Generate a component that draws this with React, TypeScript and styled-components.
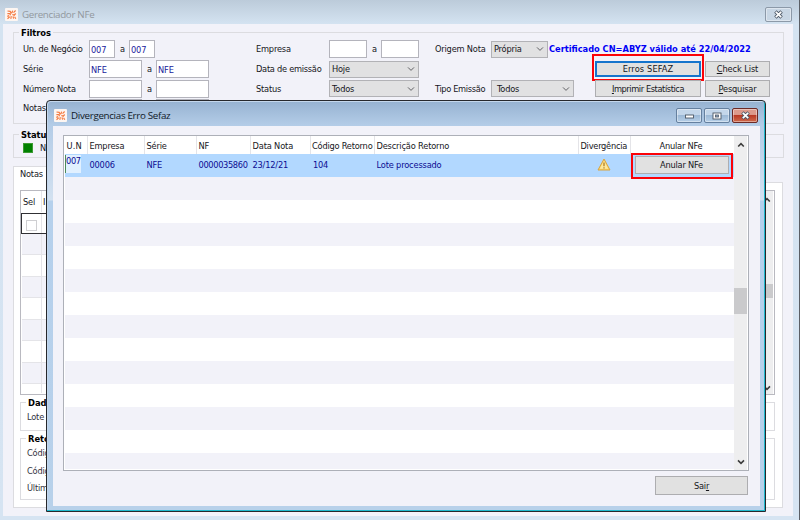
import React from 'react';
import styled, { createGlobalStyle, css } from 'styled-components';

const UI = "'DejaVu Sans Condensed', 'DejaVu Sans', sans-serif";
const TITLE = "'Open Sans', 'Noto Sans', sans-serif";

const Global = createGlobalStyle`
  *, *::before, *::after { box-sizing: border-box; }
  body { margin: 0; overflow: hidden; }
  button { appearance: none; padding: 0; margin: 0; border-radius: 0; }
`;

const Desktop = styled.div`
  position: relative;
  width: 800px;
  height: 520px;
  overflow: hidden;
  font: 9.2px/12px ${UI};
  letter-spacing: -0.2px;
  color: #16161c;
  white-space: nowrap;
`;

const MainWindow = styled.div`
  display: flex;
  flex-direction: column;
  height: 520px;
  padding: 0 6px 4px 3px;
  border-right: 1px solid #5b5f66;
  background: linear-gradient(#bccbda 0, #d4e3f1 24px, #d6e4f2 100%);
`;

const TitleBar = styled.div<{ $h: number; $dim?: boolean }>`
  display: flex;
  align-items: center;
  flex: none;
  height: ${(p) => p.$h}px;
  padding-left: 2px;
  font: 9.8px/14px ${TITLE};
  letter-spacing: -0.32px;
  color: ${(p) => (p.$dim ? '#92989e' : '#101828')};
`;

const TitleText = styled.span`
  margin: 5px auto 0 4px;
`;

const AppIconSvg = styled.svg`
  margin-top: 4px;
  flex: none;
`;

const AppIcon = () => (
  <AppIconSvg width="13" height="13" viewBox="0 0 13 13">
    <rect width="13" height="13" rx="1" fill="#fdf6f2" />
    <g stroke="#f47a40" strokeWidth="1.15" fill="none">
      <path d="M2.5 3 5.2 3.4 6.4 5.6M7.6 2.6 7 4.8M8.5 4.6 10.6 2.5M2.4 5.6 4.8 5.5 5.6 7.2M2.3 8.4 4.2 7.6M2.5 10.7 4.7 8.8M5.8 10.8 6.3 8.2M7.4 6.4 9.2 7.2 10.7 5.5M8 8.4 8.6 10.6M9.6 8.7 10.8 10.8" />
    </g>
  </AppIconSvg>
);

const WinButton = styled.button<{ $kind: 'plain' | 'pale' | 'close' }>`
  display: grid;
  place-items: center;
  width: 26px;
  height: 15px;
  border: 1px solid #65809f;
  border-radius: 2px;
  background: linear-gradient(#c3d6ea 0 45%, #9db9d6 50%, #b6cfe8);
  box-shadow: inset 0 0 0 1px #ffffff66;
  ${(p) =>
    p.$kind === 'pale' &&
    css`
      width: 27px;
      border-color: #8c99a8;
      background: #c8d6e4;
      margin: 4px 1px 0 0;
    `}
  ${(p) =>
    p.$kind === 'close' &&
    css`
      border-color: #6c2a26;
      background: linear-gradient(#dc9a8c 0 42%, #b93a25 50%, #cf6a4c);
    `}
`;

const CloseGlyph = () => (
  <svg width="11" height="9" viewBox="0 0 11 9">
    <path d="M2.4 1.5 8.6 7.5M8.6 1.5 2.4 7.5" stroke="#4c5765" strokeWidth="3.5" />
    <path d="M2.8 1.9 8.2 7.1M8.2 1.9 2.8 7.1" stroke="#fff" strokeWidth="1.8" />
  </svg>
);
const MinGlyph = () => (
  <svg width="11" height="7" viewBox="0 0 11 7">
    <rect x="1.5" y="3" width="8" height="3" fill="#fff" stroke="#4c5765" strokeWidth="0.9" />
  </svg>
);
const MaxGlyph = () => (
  <svg width="10" height="8" viewBox="0 0 10 8">
    <rect x="1" y="1" width="8" height="6" fill="#fff" stroke="#4c5765" strokeWidth="0.9" />
    <rect x="3.5" y="3" width="3" height="2" fill="#8fa6c0" stroke="#4c5765" strokeWidth="0.8" />
  </svg>
);

const Client = styled.div`
  flex: 1;
  min-height: 0;
  padding: 8px 9px 0 10px;
  background: #f2f2f9;
`;

const Group = styled.section<{ $h: number; $mb?: number }>`
  position: relative;
  height: ${(p) => p.$h}px;
  margin-bottom: ${(p) => p.$mb ?? 0}px;
  border: 1px solid #dcdce0;
`;

const Legend = styled.strong<{ $page?: boolean }>`
  position: absolute;
  top: -6px;
  left: 5px;
  padding: 0 2px;
  font-size: 9.3px;
  letter-spacing: -0.05px;
  color: #000;
  background: ${(p) => (p.$page ? '#fff' : '#f2f2f9')};
`;

const Filters = styled.div`
  display: flex;
  padding: 6px 0 0 9px;
`;

const FilterColumn = styled.div<{ $w?: number }>`
  display: grid;
  grid-template-rows: 20px 20px 19px 20px;
  width: ${(p) => (p.$w ? `${p.$w}px` : 'auto')};
`;

const FilterRow = styled.div`
  display: flex;
  align-items: center;
`;

const Label = styled.label<{ $w: number; $ls?: number }>`
  flex: none;
  width: ${(p) => p.$w}px;
  letter-spacing: ${(p) => p.$ls ?? -0.2}px;
`;

const To = styled.span`
  width: 14px;
  padding-left: 1px;
  text-align: center;
`;

const Field = styled.div<{ $w: number }>`
  width: ${(p) => p.$w}px;
  height: 18px;
  padding: 3px 0 0 1px;
  border: 1px solid #b4b4bc;
  background: #fff;
  color: #1a1a9c;
  letter-spacing: -0.15px;
`;

const SelectBox = styled.div<{ $w: number; $pad?: number }>`
  display: flex;
  align-items: center;
  justify-content: space-between;
  width: ${(p) => p.$w}px;
  height: 17px;
  padding: 0 3px 0 ${(p) => p.$pad ?? 2}px;
  border: 1px solid #b2b2b6;
  background: #e1e1e2;
`;

const Chevron = ({ up, bold }: { up?: boolean; bold?: boolean }) => (
  <svg width="8" height="6" viewBox="0 0 8 6">
    <path
      d={up ? 'M1.2 4.5 4 1.7 6.8 4.5' : 'M1 1.4 4 4.4 7 1.4'}
      fill="none"
      stroke={bold ? '#3c3c3c' : '#606064'}
      strokeWidth={bold ? 1.6 : 1}
    />
  </svg>
);

const Select = ({ w, pad, children }: { w: number; pad?: number; children: string }) => (
  <SelectBox $w={w} $pad={pad}>
    <span>{children}</span>
    <Chevron />
  </SelectBox>
);

const Certificate = styled.strong`
  margin-left: 1px;
  color: #0000f5;
  letter-spacing: 0;
`;

const PushButton = styled.button<{ $w: number; $h?: number; $ls?: number; $focus?: boolean; $ml?: number }>`
  position: relative;
  flex: none;
  width: ${(p) => p.$w}px;
  height: ${(p) => p.$h ?? 17}px;
  margin-left: ${(p) => p.$ml ?? 0}px;
  border: ${(p) => (p.$focus ? '2px solid #1574cc' : '1px solid #adadb0')};
  background: #e1e1e1;
  font: 9.2px/12px ${UI};
  letter-spacing: ${(p) => p.$ls ?? -0.2}px;
  color: #16161c;
`;

const Highlight = styled.span<{ $inset: string }>`
  position: absolute;
  inset: ${(p) => p.$inset};
  border: 2px solid #fb0308;
  pointer-events: none;
`;

const StatusBody = styled.div`
  display: flex;
  align-items: center;
  gap: 7px;
  padding: 7px 0 0 9px;
`;

const StatusSwatch = styled.i`
  width: 10px;
  height: 10px;
  background: #008000;
  border: 1px solid #3b9a32;
`;

const Tab = styled.div`
  position: relative;
  width: 90px;
  height: 17px;
  margin-bottom: -1px;
  padding: 1px 0 0 6px;
  border: 1px solid #dcdce0;
  border-bottom: 0;
  background: #fff;
  z-index: 1;
`;

const TabPage = styled.div`
  height: 326px;
  margin-right: 1px;
  padding: 7px 7px 0 6px;
  border: 1px solid #dcdce0;
  background: #fff;
`;

const NotesTable = styled.div`
  display: flex;
  height: 205px;
  margin-bottom: 7px;
  border: 1px solid #b9b9c0;
  background: #fff;
`;

const NotesGrid = styled.div`
  flex: 1;
  padding-left: 1px;
`;

const NotesRow = styled.div<{ $head?: boolean; $alt?: boolean; $current?: boolean }>`
  display: grid;
  grid-template-columns: 19px 1fr;
  align-items: center;
  height: ${(p) => (p.$head ? 22 : p.$current ? 21 : 21.45)}px;
  border-bottom: 1px solid ${(p) => (p.$head ? '#fff' : '#e4e4e8')};
  background: ${(p) => (p.$alt ? '#f2f2f9' : '#fff')};
  & > * {
    height: 100%;
    display: flex;
    align-items: center;
    padding-left: 1px;
  }
  & > * + * {
    border-left: 1px solid #e4e4e8;
  }
  &:last-child {
    height: 9px;
    border-bottom: 0;
  }
  ${(p) =>
    p.$current &&
    css`
      border: 1px solid #303034;
      margin-left: -1px;
    `}
`;

const CheckBox = styled.i`
  width: 11px;
  height: 11px;
  margin: 3px 0 0 3px;
  border: 1px solid #cfcfd2;
  background: #fff;
`;

const ScrollTrack = styled.div<{ $w: number; $pad: string }>`
  display: flex;
  flex-direction: column;
  align-items: center;
  flex: none;
  width: ${(p) => p.$w}px;
  padding: ${(p) => p.$pad};
  margin-right: 1px;
  background: #eeeeef;
`;

const ScrollThumb = styled.div<{ $before: number; $h: number }>`
  width: 100%;
  height: ${(p) => p.$h}px;
  margin-top: ${(p) => p.$before}px;
  margin-bottom: auto;
  background: #cacacc;
`;

const DetailLine = styled.div<{ $h: number }>`
  height: ${(p) => p.$h}px;
  padding-left: 6px;
  color: #33333d;
`;

const DetailBody = styled.div`
  padding-top: 8px;
`;

const Dialog = styled.div`
  position: absolute;
  left: 46px;
  top: 100px;
  z-index: 5;
  display: flex;
  flex-direction: column;
  width: 720px;
  height: 412px;
  padding: 0 5px 5px 5px;
  border: 1px solid #26282c;
  border-radius: 4px 4px 0 0;
  background: linear-gradient(#96b2d1 0, #b3cce7 24px, #d3e1f0 99px, #b5d0ec 100px, #b8d1ea 100%);
  box-shadow: inset -1px -1px 0 #1fb8cc, inset 1px 1px 0 #c4d7ec;
`;

const Controls = styled.div`
  display: flex;
  gap: 2px;
  margin: 4px 2px 0 0;
`;

const DialogBody = styled.div`
  flex: 1;
  display: flex;
  flex-direction: column;
  align-items: flex-start;
  margin-left: 1px;
  padding: 9px 0 0 10px;
  background: #f2f2f9;
`;

const ErrorTable = styled.div`
  display: flex;
  width: 686px;
  height: 336px;
  margin-bottom: 5px;
  border: 1px solid #adb0b8;
  padding-left: 1px;
  background: #fff;
`;

const ErrorGrid = styled.div`
  flex: 1;
  overflow: hidden;
`;

const ErrorRow = styled.div<{ $head?: boolean; $selected?: boolean; $alt?: boolean; $last?: boolean }>`
  display: grid;
  grid-template-columns: 23px 57px 52px 54px 60px 64px 204px 52px 1fr;
  height: ${(p) => (p.$head ? 18 : p.$last ? 16 : 23)}px;
  background: ${(p) => (p.$selected ? '#b2d8ff' : p.$alt ? '#f2f2f9' : '#fff')};
  color: ${(p) => (p.$selected ? '#0c0c92' : '#16161c')};
`;

const Cell = styled.div<{ $head?: boolean; $ls?: number; $center?: boolean; $pl?: number; $pr?: number }>`
  display: flex;
  align-items: center;
  justify-content: ${(p) => (p.$center ? 'center' : 'flex-start')};
  padding: ${(p) => (p.$head ? '1px 0 0' : '0 0 2px')};
  padding-left: ${(p) => (p.$center ? 0 : p.$pl ?? 1.5)}px;
  padding-right: ${(p) => p.$pr ?? 0}px;
  letter-spacing: ${(p) => p.$ls ?? -0.2}px;
  ${(p) =>
    p.$head &&
    css`
      border-right: 1px solid #e4e4e8;
      &:last-child { border-right: 0; }
    `}
`;

const EditCell = styled.div`
  align-self: start;
  width: 16px;
  height: 18px;
  margin-top: 1px;
  border-left: 1px solid #4c8a5b;
  background: #e1f0ff;
  letter-spacing: -0.35px;
`;

const Warning = () => (
  <svg width="14" height="13" viewBox="0 0 14 13">
    <path d="M7 1 13 12H1Z" fill="#fbd667" stroke="#d9a441" strokeWidth="1" strokeLinejoin="round" />
    <path d="M7 3 11.2 10.8H2.8Z" fill="#fde9a0" />
    <path d="M7 4.6V8.2M7 9.2V10.5" stroke="#a8741c" strokeWidth="1.2" />
  </svg>
);

const ExitRow = styled.div`
  display: flex;
  justify-content: flex-end;
  width: 685px;
`;

const HEADERS: { text: string; ls?: number; center?: boolean; pl?: number; pr?: number }[] = [
  { text: 'U.N', ls: 0.2 },
  { text: 'Empresa' },
  { text: 'Série' },
  { text: 'NF' },
  { text: 'Data Nota', ls: -0.15 },
  { text: 'Código Retorno', ls: -0.22, pl: 1 },
  { text: 'Descrição Retorno', ls: -0.17 },
  { text: 'Divergência', ls: -0.25 },
  { text: 'Anular NFe', center: true, pr: 3 },
];

const EMPTY_ROWS = Array.from({ length: 13 }, (_, i) => i);
const NOTE_ROWS = Array.from({ length: 8 }, (_, i) => i);

export default function App() {
  return (
    <Desktop>
      <Global />
      <MainWindow>
        <TitleBar $h={24} $dim>
          <AppIcon />
          <TitleText>Gerenciador NFe</TitleText>
          <WinButton $kind="pale"><CloseGlyph /></WinButton>
        </TitleBar>
        <Client>
          <Group $h={92} $mb={10}>
            <Legend>Filtros</Legend>
            <Filters>
              <FilterColumn $w={233}>
                <FilterRow>
                  <Label $w={66} $ls={-0.24}>Un. de Negócio</Label>
                  <Field $w={26}>007</Field><To>a</To><Field $w={26}>007</Field>
                </FilterRow>
                <FilterRow>
                  <Label $w={66}>Série</Label>
                  <Field $w={53}>NFE</Field><To>a</To><Field $w={53}>NFE</Field>
                </FilterRow>
                <FilterRow>
                  <Label $w={66}>Número Nota</Label>
                  <Field $w={53} /><To>a</To><Field $w={53} />
                </FilterRow>
                <FilterRow>
                  <Label $w={66}>Notas</Label>
                  <Field $w={53} /><To /><Field $w={53} />
                </FilterRow>
              </FilterColumn>
              <FilterColumn $w={179}>
                <FilterRow>
                  <Label $w={73}>Empresa</Label>
                  <Field $w={38} /><To>a</To><Field $w={38} />
                </FilterRow>
                <FilterRow>
                  <Label $w={73} $ls={-0.27}>Data de emissão</Label>
                  <Select w={90}>Hoje</Select>
                </FilterRow>
                <FilterRow>
                  <Label $w={73}>Status</Label>
                  <Select w={90}>Todos</Select>
                </FilterRow>
              </FilterColumn>
              <FilterColumn>
                <FilterRow>
                  <Label $w={56}>Origem Nota</Label>
                  <Select w={57}>Própria</Select>
                  <Certificate>Certificado CN=ABYZ válido até 22/04/2022</Certificate>
                </FilterRow>
                <FilterRow>
                  <PushButton $w={106} $h={16} $ml={160} $ls={0.12} $focus>
                    Erros SEFAZ
                    <Highlight $inset="-9px -5px -6px -5px" />
                  </PushButton>
                  <PushButton $w={65} $h={16} $ml={4} $ls={-0.1}><u>C</u>heck List</PushButton>
                </FilterRow>
                <FilterRow>
                  <Label $w={56} $ls={-0.35}>Tipo Emissão</Label>
                  <Select w={83} pad={5}>Todos</Select>
                  <PushButton $w={106} $ml={21} $ls={-0.42}><u>I</u>mprimir Estatística</PushButton>
                  <PushButton $w={65} $ml={4}><u>P</u>esquisar</PushButton>
                </FilterRow>
              </FilterColumn>
            </Filters>
          </Group>

          <Group $h={24} $mb={8}>
            <Legend>Status</Legend>
            <StatusBody><StatusSwatch />N</StatusBody>
          </Group>

          <Tab>Notas</Tab>
          <TabPage>
            <NotesTable>
              <NotesGrid>
                <NotesRow $head><span>Sel</span><span>I</span></NotesRow>
                <NotesRow $current><span><CheckBox /></span><span /></NotesRow>
                {NOTE_ROWS.map((i) => (
                  <NotesRow key={i} $alt={i % 2 === 0}><span /><span /></NotesRow>
                ))}
              </NotesGrid>
              <ScrollTrack $w={13} $pad="6px 0 3px">
                <Chevron up bold />
                <ScrollThumb $before={81} $h={14} />
                <Chevron bold />
              </ScrollTrack>
            </NotesTable>
            <Group $h={29} $mb={7}>
              <Legend $page>Dado</Legend>
              <DetailBody><DetailLine $h={12}>Lote</DetailLine></DetailBody>
            </Group>
            <Group $h={62}>
              <Legend $page>Reto</Legend>
              <DetailBody>
                <DetailLine $h={18}>Códig</DetailLine>
                <DetailLine $h={17}>Códig</DetailLine>
                <DetailLine $h={12}>Últim</DetailLine>
              </DetailBody>
            </Group>
          </TabPage>
        </Client>
      </MainWindow>

      <Dialog>
        <TitleBar $h={25}>
          <AppIcon />
          <TitleText>Divergencias Erro Sefaz</TitleText>
          <Controls>
            <WinButton $kind="plain"><MinGlyph /></WinButton>
            <WinButton $kind="plain"><MaxGlyph /></WinButton>
            <WinButton $kind="close"><CloseGlyph /></WinButton>
          </Controls>
        </TitleBar>
        <DialogBody>
          <ErrorTable>
            <ErrorGrid>
              <ErrorRow $head>
                {HEADERS.map((h) => (
                  <Cell key={h.text} $head $ls={h.ls} $center={h.center} $pl={h.pl} $pr={h.pr}>{h.text}</Cell>
                ))}
              </ErrorRow>
              <ErrorRow $selected>
                <EditCell>007</EditCell>
                <Cell>00006</Cell>
                <Cell>NFE</Cell>
                <Cell $ls={-0.35}>0000035860</Cell>
                <Cell>23/12/21</Cell>
                <Cell $pl={2}>104</Cell>
                <Cell $ls={-0.17}>Lote processado</Cell>
                <Cell $center $pr={3}><Warning /></Cell>
                <Cell $center $pr={2}>
                  <PushButton $w={94} $h={18}>
                    Anular NFe
                    <Highlight $inset="-4px -5px -6px -5px" />
                  </PushButton>
                </Cell>
              </ErrorRow>
              {EMPTY_ROWS.map((i) => (
                <ErrorRow key={i} $alt={i % 2 === 0} $last={i === 12} />
              ))}
            </ErrorGrid>
            <ScrollTrack $w={13} $pad="6px 0 5px">
              <Chevron up bold />
              <ScrollThumb $before={140} $h={26} />
              <Chevron bold />
            </ScrollTrack>
          </ErrorTable>
          <ExitRow>
            <PushButton $w={93} $h={19}>Sai<u>r</u></PushButton>
          </ExitRow>
        </DialogBody>
      </Dialog>
    </Desktop>
  );
}
